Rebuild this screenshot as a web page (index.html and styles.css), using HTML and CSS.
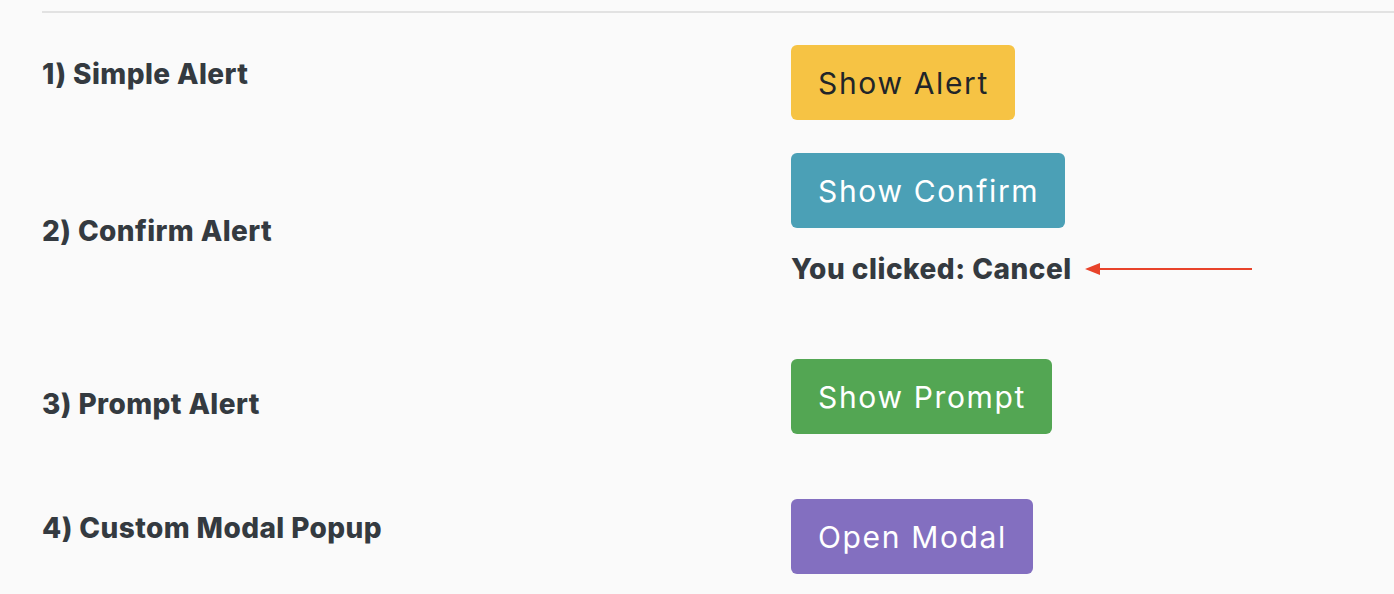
FILE: index.html
```html
<!DOCTYPE html>
<html lang="en">
<head>
<meta charset="utf-8">
<title>Alerts</title>
<link rel="stylesheet" href="styles.css">
</head>
<body>
<main class="page">
  <section class="demo-list">
    <div class="row row-1">
      <h3 class="label">1) Simple Alert</h3>
      <div class="actions">
        <button class="btn btn-yellow">Show Alert</button>
      </div>
    </div>
    <div class="row row-2">
      <h3 class="label">2) Confirm Alert</h3>
      <div class="actions">
        <button class="btn btn-teal">Show Confirm</button>
        <div class="result">
          <span class="result-text">You clicked: Cancel</span>
          <svg class="arrow" width="167" height="14" viewBox="0 0 167 14" aria-hidden="true">
            <line x1="12" y1="7" x2="167" y2="7" stroke="#e8432a" stroke-width="2"/>
            <polygon points="0,7 15,1 15,13" fill="#e8432a"/>
          </svg>
        </div>
      </div>
    </div>
    <div class="row row-3">
      <h3 class="label">3) Prompt Alert</h3>
      <div class="actions">
        <button class="btn btn-green">Show Prompt</button>
      </div>
    </div>
    <div class="row row-4">
      <h3 class="label">4) Custom Modal Popup</h3>
      <div class="actions">
        <button class="btn btn-purple">Open Modal</button>
      </div>
    </div>
  </section>
</main>
</body>
</html>
```
FILE: styles.css
```css
html, body {
  margin: 0;
  padding: 0;
  background: #fafafa;
}

body {
  font-family: "Inter", "Liberation Sans", sans-serif;
  color: #343a40;
  height: 594px;
  overflow: hidden;
}

.page {
  padding: 11px 0 0 42px;
}

.demo-list {
  border-top: 2px solid #e2e2e2;
  padding-top: 32px;
}

.row {
  display: grid;
  grid-template-columns: 749px 1fr;
  align-items: start;
}

.label {
  margin: 0;
  font-size: 28px;
  font-weight: 800;
  line-height: 40px;
  letter-spacing: 0.4px;
}

.row-1 { margin-bottom: 33px; }
.row-1 .label { margin-top: 9px; }

.row-2 { margin-bottom: 72px; }
.row-2 .label { margin-top: 58px; }

.row-3 { margin-bottom: 65px; }
.row-3 .label { margin-top: 25px; }

.row-4 .label { margin-top: 9px; }

.actions {
  display: flex;
  flex-direction: column;
  align-items: flex-start;
}

.btn {
  font-family: inherit;
  font-size: 30px;
  font-weight: 400;
  letter-spacing: 1.65px;
  height: 75px;
  padding: 0 26px 0 27px;
  border: none;
  border-radius: 6px;
  color: #ffffff;
  cursor: pointer;
}

.btn-yellow { background: #f6c344; color: #212529; }
.btn-teal { background: #4ba0b6; }
.btn-green { background: #53a653; }
.btn-purple { background: #836fc0; }

.result {
  display: flex;
  align-items: center;
  gap: 13px;
  margin-top: 23px;
  height: 36px;
}

.result-text {
  font-size: 28px;
  font-weight: 800;
  line-height: 36px;
  letter-spacing: 0.5px;
}

.arrow {
  display: block;
}
```
